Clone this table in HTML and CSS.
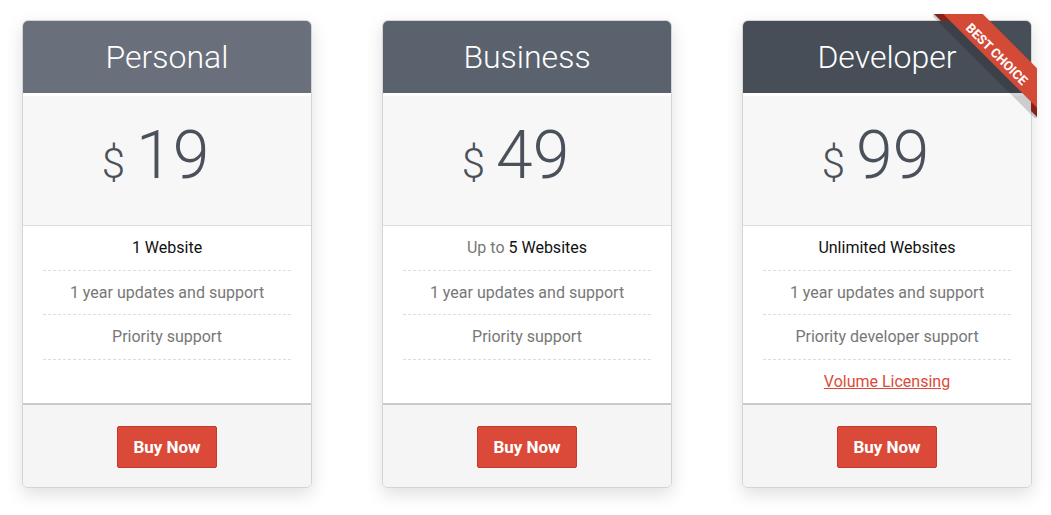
FILE: index.html
```html
<!DOCTYPE html>
<html lang="en">
<head>
<meta charset="utf-8">
<title>Pricing</title>
<link rel="stylesheet" href="styles.css">
</head>
<body>
<div class="pricing">
  <div class="card">
    <div class="card-head head-personal">Personal</div>
    <div class="price"><span class="cur">$</span><span class="amt">19</span></div>
    <ul class="features">
      <li><span class="hl">1 Website</span></li>
      <li>1 year updates and support</li>
      <li>Priority support</li>
    </ul>
    <div class="card-foot"><button class="buy">Buy Now</button></div>
  </div>
  <div class="card">
    <div class="card-head head-business">Business</div>
    <div class="price"><span class="cur">$</span><span class="amt">49</span></div>
    <ul class="features">
      <li>Up to <span class="hl">5 Websites</span></li>
      <li>1 year updates and support</li>
      <li>Priority support</li>
    </ul>
    <div class="card-foot"><button class="buy">Buy Now</button></div>
  </div>
  <div class="card">
    <div class="ribbon"><span>Best Choice</span></div>
    <div class="card-head head-developer">Developer</div>
    <div class="price"><span class="cur">$</span><span class="amt">99</span></div>
    <ul class="features">
      <li><span class="hl">Unlimited Websites</span></li>
      <li>1 year updates and support</li>
      <li>Priority developer support</li>
      <li class="last"><a href="#" class="link">Volume Licensing</a></li>
    </ul>
    <div class="card-foot"><button class="buy">Buy Now</button></div>
  </div>
</div>
</body>
</html>
```
FILE: styles.css
```css
html, body {
  margin: 0;
  padding: 0;
  background: #fff;
}
body {
  font-family: Roboto, "Liberation Sans", sans-serif;
}
.pricing {
  display: flex;
  align-items: stretch;
  gap: 70px;
  padding: 20px 0 27px 22px;
}
.card {
  position: relative;
  width: 290px;
  box-sizing: border-box;
  border: 1px solid #d4d4d4;
  border-radius: 6px;
  background: #fff;
  box-shadow: 0 6px 18px rgba(0, 0, 0, 0.13);
  display: flex;
  flex-direction: column;
}
.card-head {
  height: 72px;
  line-height: 72px;
  border-bottom: 3px solid #fff;
  border-radius: 5px 5px 0 0;
  color: #fff;
  font-size: 32px;
  font-weight: 300;
  text-align: center;
}
.head-personal { background: #69707b; }
.head-business { background: #5a626d; }
.head-developer { background: #474e58; }
.price {
  height: 130px;
  box-sizing: border-box;
  padding: 27px 23px 0 0;
  background: #f7f7f7;
  border-bottom: 1px solid #dddddd;
  display: flex;
  justify-content: center;
  align-items: baseline;
  color: #4b515a;
  font-weight: 300;
}
.cur {
  font-size: 42px;
  line-height: 66px;
  margin-right: 11px;
}
.amt {
  font-size: 66px;
  line-height: 66px;
}
.features {
  list-style: none;
  margin: 0;
  padding: 0 20px;
  flex: 1;
}
.features li {
  padding: 10px 0;
  line-height: 23.5px;
  border-bottom: 1px dashed #dddddd;
  text-align: center;
  font-size: 16px;
  color: #777;
}
.features li.last {
  border-bottom: none;
}
.hl {
  color: #111;
}
.link {
  color: #db4a39;
  text-decoration: underline;
}
.card-foot {
  border-top: 2px solid #c9c9c9;
  background: #f5f5f5;
  border-radius: 0 0 5px 5px;
  padding: 21px 0 19px;
  text-align: center;
}
.buy {
  height: 42px;
  padding: 0 15px;
  border: 1px solid #c63a2b;
  border-radius: 2px;
  background: #db4a39;
  color: #fff;
  font-family: Roboto, "Liberation Sans", sans-serif;
  font-size: 17px;
  font-weight: 700;
  cursor: pointer;
}
.ribbon {
  position: absolute;
  z-index: 2;
  top: -7px;
  right: -6px;
  width: 104px;
  height: 104px;
  overflow: hidden;
}
.ribbon::before,
.ribbon::after {
  content: "";
  position: absolute;
  z-index: 0;
  background: #a3291c;
}
.ribbon::before {
  top: 0;
  left: 0;
  width: 20px;
  height: 7px;
  clip-path: polygon(1px 0, 20px 0, 20px 7px, 8px 7px);
}
.ribbon::after {
  right: 0;
  bottom: 0;
  width: 6px;
  height: 20px;
  clip-path: polygon(0 0, 6px 0, 6px 19px, 0 13px);
}
.ribbon span {
  position: absolute;
  z-index: 1;
  left: -8px;
  top: 23px;
  width: 150px;
  height: 23px;
  padding-top: 5px;
  line-height: 28px;
  background: #d34a37;
  box-shadow: 0 9px 0 rgba(0, 0, 0, 0.17);
  color: #fff;
  font-size: 13px;
  font-weight: 700;
  text-transform: uppercase;
  text-align: center;
  transform: rotate(45deg);
}
```
